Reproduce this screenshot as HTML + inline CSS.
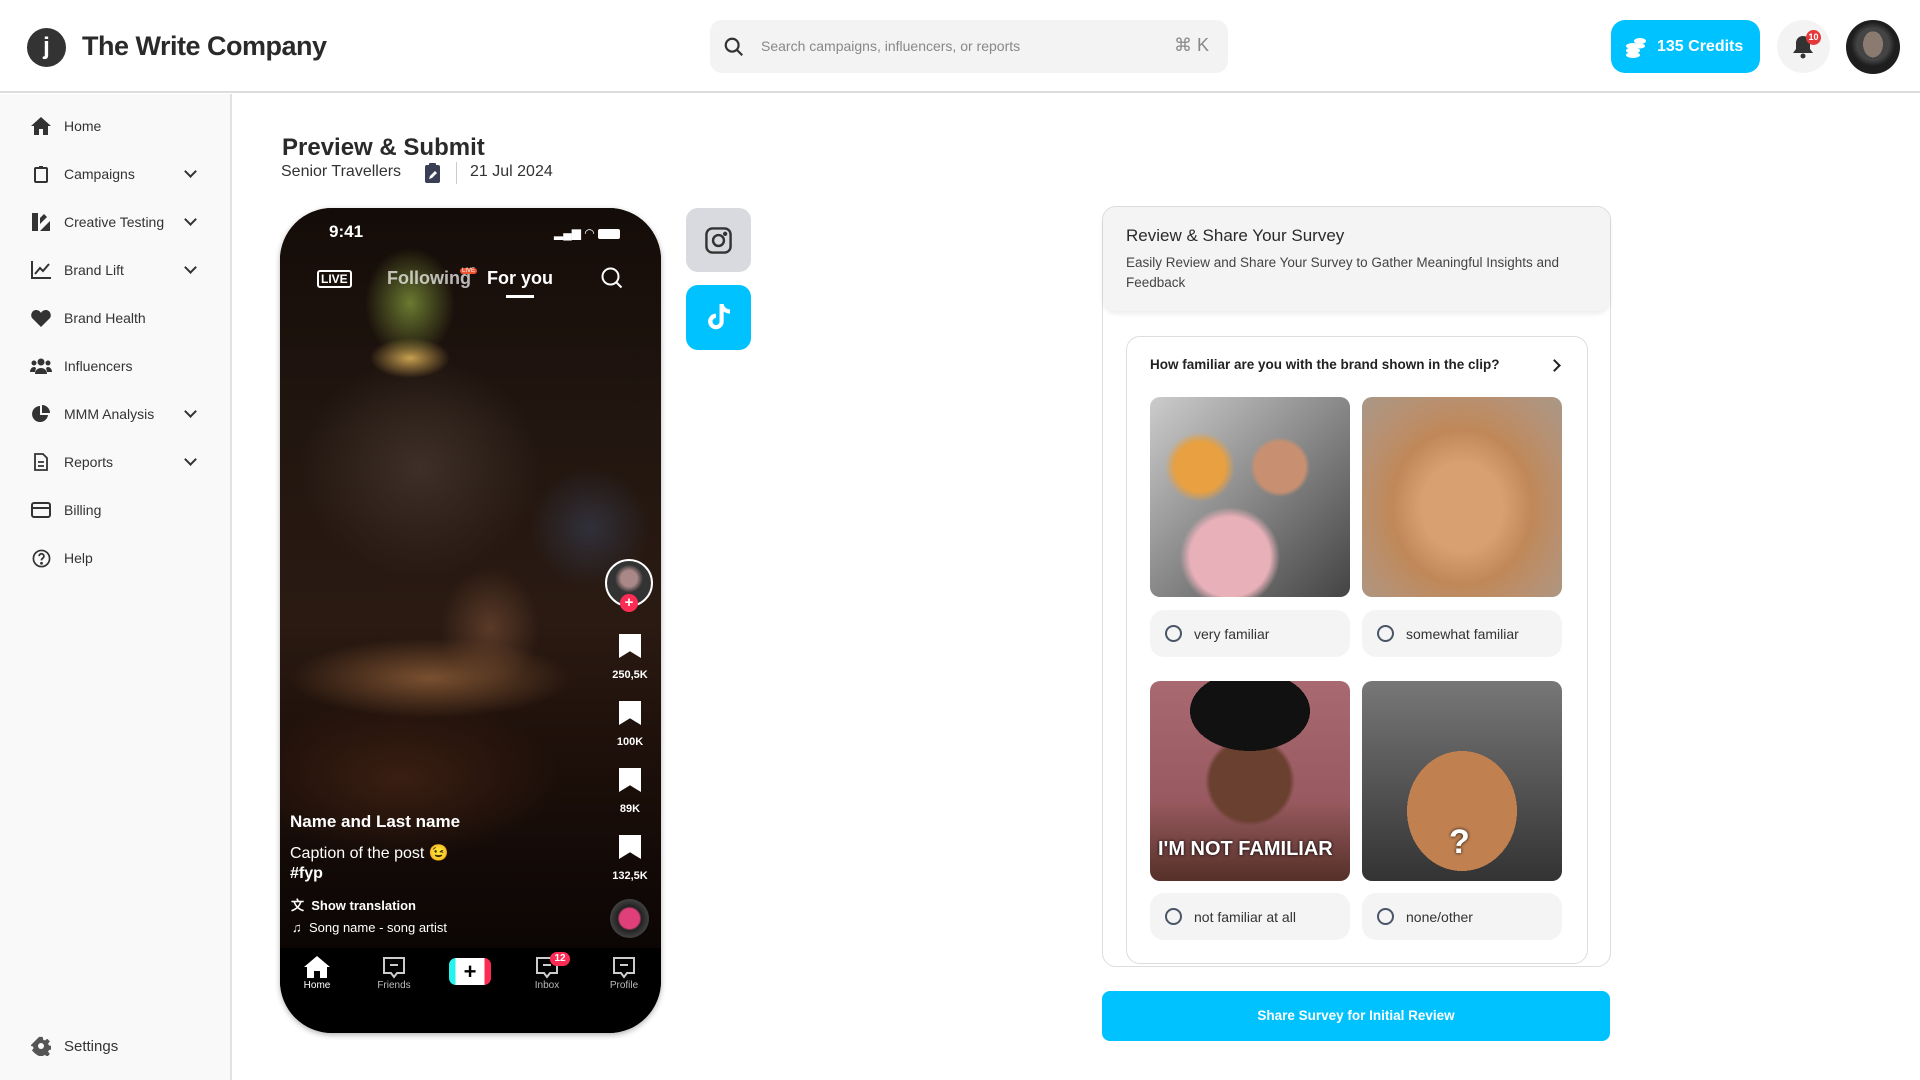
<!DOCTYPE html>
<html><head><meta charset="utf-8"><style>
*{box-sizing:border-box;margin:0;padding:0}
body{width:1920px;height:1080px;overflow:hidden;background:#fff;font-family:"Liberation Sans",sans-serif;color:#333;position:relative}
.abs{position:absolute}
.hdr{left:0;top:0;width:1920px;height:93px;border-bottom:2px solid #ddd;background:#fff}
.side{left:0;top:94px;width:232px;height:986px;background:#f9f9f9;border-right:2px solid #e2e2e2}
.nav{position:absolute;left:30px;font-size:14px;color:#333;display:flex;align-items:center;gap:12px}
.nav .ic{width:22px;height:20px;display:flex;align-items:center;justify-content:center}
.chev{position:absolute;left:186px;width:9px;height:9px;border-right:2px solid #333;border-bottom:2px solid #333;transform:rotate(45deg)}
.phone{left:280px;top:208px;width:381px;height:825px;border-radius:52px;overflow:hidden;background:#000;box-shadow:0 2px 6px rgba(0,0,0,.3)}
.wt{color:#fff;position:absolute}
.opt{position:absolute;background:#f4f4f4;border-radius:14px;height:47px;display:flex;align-items:center;padding-left:15px;font-size:14px;color:#333;gap:12px;width:200px}
.opt i{width:17px;height:17px;border:2px solid #4a5568;border-radius:50%;display:block}
.img{position:absolute;width:200px;height:200px;border-radius:10px;overflow:hidden}
.bm{position:absolute;left:619px;width:22px;height:24px;background:#fff;clip-path:polygon(0 0,100% 0,100% 100%,50% 72%,0 100%)}
.cnt{position:absolute;left:595px;width:70px;text-align:center;color:#fff;font-size:11px;font-weight:bold}
.tab{position:absolute;top:980px;font-size:10px;color:#bbb;text-align:center;width:60px}
</style></head><body>
<div class="abs hdr"></div>
<div class="abs" style="left:27px;top:28px;width:39px;height:39px;border-radius:50%;background:#333;color:#fff;font-size:24px;font-weight:bold;text-align:center;line-height:38px">j</div>
<div class="abs" style="left:82px;top:31px;font-size:27px;font-weight:bold;color:#2a2a2a;letter-spacing:-0.5px">The Write Company</div>
<div class="abs" style="left:710px;top:20px;width:518px;height:53px;border-radius:12px;background:#f3f3f3"></div>
<svg class="abs" style="left:723px;top:36px" width="22" height="22" viewBox="0 0 24 24" fill="none" stroke="#333" stroke-width="2.4"><circle cx="10" cy="10" r="7"/><path d="M15 15l6 6"/></svg>
<div class="abs" style="left:761px;top:38px;font-size:14px;color:#888">Search campaigns, influencers, or reports</div>
<div class="abs" style="left:1174px;top:35px;font-size:18px;color:#888">⌘ K</div>
<div class="abs" style="left:1611px;top:20px;width:149px;height:53px;border-radius:14px;background:#00c2ff;color:#fff;font-size:16px;font-weight:bold;line-height:53px;padding-left:46px">135 Credits</div>
<svg class="abs" style="left:1625px;top:36px" width="22" height="22" viewBox="0 0 22 22" fill="#fff"><ellipse cx="8" cy="10" rx="7" ry="3"/><ellipse cx="8" cy="14.5" rx="7" ry="3"/><ellipse cx="8" cy="19" rx="7" ry="3"/><ellipse cx="15" cy="5" rx="6" ry="3"/><ellipse cx="15" cy="10" rx="5" ry="2.5"/></svg>
<div class="abs" style="left:1777px;top:20px;width:53px;height:53px;border-radius:50%;background:#f3f3f3"></div>
<svg class="abs" style="left:1791px;top:34px" width="24" height="26" viewBox="0 0 24 26" fill="#333"><path d="M12 2c-4 0-7 3-7 7v6l-3 4h20l-3-4V9c0-4-3-7-7-7z"/><circle cx="12" cy="22" r="2.5"/></svg>
<div class="abs" style="left:1806px;top:30px;width:15px;height:15px;border-radius:50%;background:#e5383b;color:#fff;font-size:9px;text-align:center;line-height:15px;font-weight:bold">10</div>
<div class="abs" style="left:1846px;top:20px;width:54px;height:54px;border-radius:50%;background:radial-gradient(ellipse 10px 13px at 50% 45%,#8a7a70 0 100%,transparent),radial-gradient(circle at 50% 45%,#444 0 16px,#1e1e1e 22px)"></div>

<div class="abs side"></div>
<div class="nav" style="top:116px"><span class="ic"><svg width="20" height="18" viewBox="0 0 20 18" fill="#333"><path d="M10 0L0 9h3v9h5v-6h4v6h5V9h3z"/></svg></span>Home</div>
<div class="nav" style="top:164px"><span class="ic"><svg width="14" height="18" viewBox="0 0 14 18" fill="none" stroke="#333" stroke-width="2"><rect x="1" y="3" width="12" height="14" rx="1"/><path d="M5 2h4"/></svg></span>Campaigns</div><div class="chev" style="top:167px"></div>
<div class="nav" style="top:212px"><span class="ic"><svg width="20" height="20" viewBox="0 0 20 20" fill="#333"><rect x="1" y="1" width="6" height="18"/><path d="M9 19l10-10v10z"/><path d="M9 6l4-4 3 3-7 7z"/></svg></span>Creative Testing</div><div class="chev" style="top:215px"></div>
<div class="nav" style="top:260px"><span class="ic"><svg width="20" height="18" viewBox="0 0 20 18" fill="none" stroke="#333" stroke-width="2"><path d="M1 0v17h19M4 13l5-6 3 3 6-7"/></svg></span>Brand Lift</div><div class="chev" style="top:263px"></div>
<div class="nav" style="top:308px"><span class="ic"><svg width="20" height="18" viewBox="0 0 20 18" fill="#333"><path d="M10 18L1 9C-1 6 1 1 5 1c2 0 4 1 5 3 1-2 3-3 5-3 4 0 6 5 4 8z"/></svg></span>Brand Health</div>
<div class="nav" style="top:356px"><span class="ic"><svg width="22" height="16" viewBox="0 0 22 16" fill="#333"><circle cx="11" cy="4" r="3.5"/><circle cx="4" cy="5" r="2.5"/><circle cx="18" cy="5" r="2.5"/><path d="M5 16c0-4 3-6 6-6s6 2 6 6zM0 14c0-3 2-5 4-5 1 0 2 1 2 1l-1 4zM22 14c0-3-2-5-4-5-1 0-2 1-2 1l1 4z"/></svg></span>Influencers</div>
<div class="nav" style="top:404px"><span class="ic"><svg width="18" height="18" viewBox="0 0 18 18" fill="#333"><path d="M8 1a8 8 0 108 9H8z"/><path d="M10 0v8h8a8 8 0 00-8-8z"/></svg></span>MMM Analysis</div><div class="chev" style="top:407px"></div>
<div class="nav" style="top:452px"><span class="ic"><svg width="14" height="18" viewBox="0 0 14 18" fill="none" stroke="#333" stroke-width="1.8"><path d="M1 1h8l4 4v12H1z M4 9h6M4 13h6"/></svg></span>Reports</div><div class="chev" style="top:455px"></div>
<div class="nav" style="top:500px"><span class="ic"><svg width="20" height="16" viewBox="0 0 20 16" fill="none" stroke="#333" stroke-width="2"><rect x="1" y="1" width="18" height="14" rx="2"/><path d="M1 6h18"/></svg></span>Billing</div>
<div class="nav" style="top:548px"><span class="ic"><svg width="19" height="19" viewBox="0 0 20 20" fill="none" stroke="#333" stroke-width="1.8"><circle cx="10" cy="10" r="8.5"/><path d="M7.5 7.5a2.5 2.5 0 114 2c-1 .6-1.5 1.2-1.5 2.5"/><circle cx="10" cy="15" r=".6" fill="#333"/></svg></span>Help</div>
<div class="nav" style="top:1036px;font-size:15px"><span class="ic"><svg width="20" height="20" viewBox="0 0 20 20" fill="#555"><path d="M8 0h4l.5 3 2 1 2.5-2 3 3-2 2.5 1 2 3 .5v4l-3 .5-1 2 2 2.5-3 3-2.5-2-2 1-.5 3H8l-.5-3-2-1L3 18 0 15l2-2.5-1-2L-2 10z" transform="scale(.9) translate(1 1)"/><circle cx="10" cy="10" r="3" fill="#f9f9f9"/></svg></span>Settings</div>

<div class="abs" style="left:282px;top:134px;font-size:24px;font-weight:bold;color:#2a2a2a">Preview &amp; Submit</div>
<div class="abs" style="left:281px;top:163px;font-size:16px;color:#333">Senior Travellers</div>
<svg class="abs" style="left:425px;top:163px" width="15" height="20" viewBox="0 0 15 20" fill="#3a3f55"><rect x="0" y="2" width="15" height="18" rx="2"/><rect x="4" y="0" width="7" height="4" rx="1"/><path d="M4 16l1-3 5-5 2 2-5 5z" fill="#fff"/></svg>
<div class="abs" style="left:456px;top:162px;width:1px;height:22px;background:#ccc"></div>
<div class="abs" style="left:470px;top:163px;font-size:16px;color:#333">21 Jul 2024</div>

<div class="abs phone">
 <div class="abs" style="left:0;top:0;width:381px;height:750px;background:
 radial-gradient(ellipse 45px 55px at 130px 95px,#6a7a30,transparent),
 radial-gradient(ellipse 40px 20px at 130px 150px,#c8a050,transparent),
 radial-gradient(ellipse 140px 40px at 150px 470px,#7a5030,transparent),
 radial-gradient(ellipse 50px 60px at 210px 420px,#5a3a28,transparent),
 radial-gradient(ellipse 120px 110px at 140px 260px,#3e3028,transparent),
 radial-gradient(ellipse 60px 60px at 310px 320px,#30303a,transparent),
 radial-gradient(ellipse 160px 80px at 120px 570px,#3a1e12,transparent),
 linear-gradient(#140c08,#221610 30%,#2a1a12 55%,#1e100a 72%,#0a0504)"></div>
 <div class="abs" style="left:0;top:740px;width:381px;height:90px;background:#000"></div>
</div>
<div class="wt" style="left:329px;top:222px;font-size:17px;font-weight:bold">9:41</div>
<div class="wt" style="left:554px;top:226px;font-size:12px">▂▄▆ ◠ <span style="display:inline-block;width:22px;height:10px;background:#fff;border-radius:2px;vertical-align:middle"></span></div>
<div class="wt" style="left:317px;top:270px;font-size:12px;font-weight:bold;border:2px solid #fff;border-radius:3px;padding:0 2px">LIVE</div>
<div class="wt" style="left:387px;top:268px;font-size:18px;font-weight:bold;color:rgba(255,255,255,.7)">Following</div>
<div class="wt" style="left:460px;top:268px;background:#e53;border-radius:4px;padding:0 2px;font-size:6px">LIVE</div>
<div class="wt" style="left:487px;top:268px;font-size:18px;font-weight:bold">For you</div>
<div class="abs" style="left:506px;top:295px;width:28px;height:3px;background:#fff"></div>
<svg class="abs" style="left:600px;top:266px" width="24" height="24" viewBox="0 0 24 24" fill="none" stroke="#fff" stroke-width="2"><circle cx="10.5" cy="10.5" r="8"/><path d="M16.5 16.5l5 5"/></svg>
<div class="abs" style="left:605px;top:559px;width:48px;height:48px;border-radius:50%;border:2px solid #fff;background:radial-gradient(circle at 50% 40%,#a88 0 8px,#333 14px)"></div>
<div class="abs" style="left:620px;top:594px;width:18px;height:18px;border-radius:50%;background:#fe2c55;color:#fff;text-align:center;font-size:15px;line-height:17px;font-weight:bold">+</div>
<div class="bm" style="top:634px"></div><div class="cnt" style="top:669px">250,5K</div>
<div class="bm" style="top:701px"></div><div class="cnt" style="top:736px">100K</div>
<div class="bm" style="top:768px"></div><div class="cnt" style="top:803px">89K</div>
<div class="bm" style="top:835px"></div><div class="cnt" style="top:870px">132,5K</div>
<div class="abs" style="left:610px;top:899px;width:39px;height:39px;border-radius:50%;background:radial-gradient(circle,#e0407a 0 10px,#222 12px,#444 20px)"></div>
<div class="wt" style="left:290px;top:812px;font-size:17px;font-weight:bold">Name and Last name</div>
<div class="wt" style="left:290px;top:843px;font-size:16px">Caption of the post 😉</div>
<div class="wt" style="left:290px;top:865px;font-size:16px;font-weight:bold">#fyp</div>
<div class="wt" style="left:291px;top:895px;font-size:13px;font-weight:bold">文 &nbsp;Show translation</div>
<div class="wt" style="left:292px;top:920px;font-size:13px">♫ &nbsp;Song name - song artist</div>
<svg class="abs" style="left:304px;top:956px" width="26" height="22" viewBox="0 0 26 22" fill="#fff"><path d="M13 0L0 11h3v11h7v-7h6v7h7V11h3z"/></svg>
<div class="tab" style="left:287px;color:#fff">Home</div>
<svg class="abs" style="left:383px;top:957px" width="22" height="22" viewBox="0 0 22 22" fill="none" stroke="#ccc" stroke-width="2"><path d="M1 1h20v15h-7l-3 4-3-4H1z M7 8h8"/></svg><div class="tab" style="left:364px">Friends</div>
<div class="abs" style="left:449px;top:958px;width:42px;height:27px;border-radius:7px;background:linear-gradient(90deg,#25f4ee 0 15%,#fff 15% 85%,#fe2c55 85%);color:#000;font-size:22px;text-align:center;line-height:27px;font-weight:bold">+</div>
<svg class="abs" style="left:536px;top:957px" width="22" height="22" viewBox="0 0 22 22" fill="none" stroke="#ccc" stroke-width="2"><path d="M1 1h20v15h-7l-3 4-3-4H1z M7 8h8"/></svg><div class="tab" style="left:517px">Inbox</div>
<div class="abs" style="left:550px;top:952px;width:20px;height:14px;border-radius:7px;background:#fe2c55;color:#fff;font-size:10px;text-align:center;line-height:14px;font-weight:bold">12</div>
<svg class="abs" style="left:613px;top:957px" width="22" height="22" viewBox="0 0 22 22" fill="none" stroke="#ccc" stroke-width="2"><path d="M1 1h20v15h-7l-3 4-3-4H1z M7 8h8"/></svg><div class="tab" style="left:594px">Profile</div>

<div class="abs" style="left:686px;top:208px;width:65px;height:64px;border-radius:12px;background:#d9dadf"></div>
<svg class="abs" style="left:704px;top:226px" width="29" height="29" viewBox="0 0 24 24" fill="none" stroke="#333" stroke-width="2"><rect x="2" y="2" width="20" height="20" rx="5"/><circle cx="12" cy="12" r="4.5"/><circle cx="17.5" cy="6.5" r=".8" fill="#333"/></svg>
<div class="abs" style="left:686px;top:285px;width:65px;height:65px;border-radius:12px;background:#00c2ff"></div>
<svg class="abs" style="left:706px;top:304px" width="25" height="27" viewBox="0 0 24 26" fill="#fff"><path d="M13 0h4c.3 3 2.5 5 6 5.2v4c-2.3 0-4.3-.7-6-2v9.5A7.5 7.5 0 1 1 9.5 9.3v4.2A3.4 3.4 0 1 0 13 16.7z"/></svg>

<div class="abs" style="left:1102px;top:206px;width:509px;height:761px;border:1.5px solid #ddd;border-radius:14px;background:#fff"></div>
<div class="abs" style="left:1103px;top:207px;width:507px;height:104px;border-radius:13px;background:#f4f4f4;box-shadow:0 3px 5px rgba(0,0,0,.07)"></div>
<div class="abs" style="left:1126px;top:226px;font-size:17px;color:#2a2a2a">Review &amp; Share Your Survey</div>
<div class="abs" style="left:1126px;top:253px;font-size:13.5px;color:#444;line-height:20px;width:480px">Easily Review and Share Your Survey to Gather Meaningful Insights and Feedback</div>
<div class="abs" style="left:1126px;top:336px;width:462px;height:628px;border:1.5px solid #ddd;border-radius:14px"></div>
<div class="abs" style="left:1150px;top:357px;font-size:13.5px;font-weight:bold;color:#222">How familiar are you with the brand shown in the clip?</div>
<div class="abs" style="left:1550px;top:361px;width:9px;height:9px;border-right:2px solid #222;border-top:2px solid #222;transform:rotate(45deg)"></div>
<div class="img" style="left:1150px;top:397px;background:radial-gradient(circle at 65% 35%,#c89070 0 25px,transparent 30px),radial-gradient(circle at 40% 80%,#e8b0b8 0 40px,transparent 50px),radial-gradient(circle at 25% 35%,#e8a040 0 25px,transparent 35px),linear-gradient(135deg,#ccc,#888 50%,#444)"></div>
<div class="img" style="left:1362px;top:397px;background:radial-gradient(ellipse at 50% 55%,#d8a070 0 40px,#c08858 70px,#b89070 100px,#a89888)"></div>
<div class="opt" style="left:1150px;top:610px"><i></i>very familiar</div>
<div class="opt" style="left:1362px;top:610px"><i></i>somewhat familiar</div>
<div class="img" style="left:1150px;top:681px;background:radial-gradient(ellipse 60px 40px at 50% 15%,#111 0 100%,transparent),radial-gradient(circle at 50% 50%,#6a4030 0 40px,transparent 45px),linear-gradient(#a86a70,#985a60 60%,#553028)"><div style="position:absolute;left:8px;top:157px;color:#fff;font-size:20px;font-weight:bold;text-shadow:0 0 3px #000">I'M NOT FAMILIAR</div></div>
<div class="img" style="left:1362px;top:681px;background:radial-gradient(ellipse 55px 60px at 50% 65%,#c08050 0 100%,transparent),linear-gradient(#777,#555 50%,#333)"><div style="position:absolute;left:87px;top:142px;color:#fff;font-size:34px;font-weight:bold;text-shadow:0 0 3px #000">?</div></div>
<div class="opt" style="left:1150px;top:893px"><i></i>not familiar at all</div>
<div class="opt" style="left:1362px;top:893px"><i></i>none/other</div>

<div class="abs" style="left:1102px;top:991px;width:508px;height:50px;border-radius:8px;background:#00c2ff;color:#fff;font-size:13.5px;font-weight:bold;text-align:center;line-height:50px">Share Survey for Initial Review</div>
</body></html>
